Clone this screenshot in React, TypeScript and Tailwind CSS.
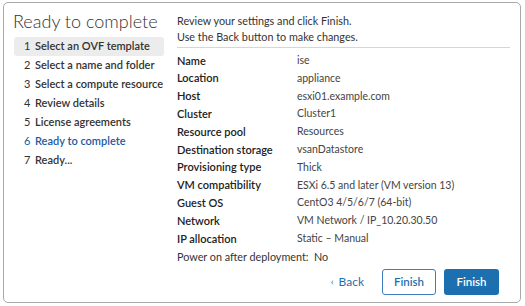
import React from "react";

const steps = [
  "Select an OVF template",
  "Select a name and folder",
  "Select a compute resource",
  "Review details",
  "License agreements",
  "Ready to complete",
  "Ready...",
];

const rows: [string, string][] = [
  ["Name", "ise"],
  ["Location", "appliance"],
  ["Host", "esxi01.example.com"],
  ["Cluster", "Cluster1"],
  ["Resource pool", "Resources"],
  ["Destination storage", "vsanDatastore"],
  ["Provisioning type", "Thick"],
  ["VM compatibility", "ESXi 6.5 and later (VM version 13)"],
  ["Guest OS", "CentO3 4/5/6/7 (64-bit)"],
  ["Network", "VM Network / IP_10.20.30.50"],
  ["IP allocation", "Static – Manual"],
];

export default function App() {
  return (
    <div className="w-[525px] h-[306px] bg-white pt-[2px] pl-[3px] pr-[4px] pb-[2px]" style={{ fontFamily: "Lato, 'Noto Sans', sans-serif" }}>
      <div className="h-[301px] border border-[#a8a8a8] rounded-[5px] flex text-[#222]">
        <div className="w-[163px] shrink-0 pl-[10px] pt-[6px] whitespace-nowrap">
          <div className="text-[18px] font-light leading-[24px] text-[#333] -ml-[1px]">Ready to complete</div>
          <div className="mt-[4px] flex flex-col">
            {steps.map((s, i) => (
              <div
                key={s}
                className={
                  "h-[19px] flex items-center rounded-[3px] pl-[10px] text-[11px] font-semibold w-[150px] " +
                  (i === 0 ? "bg-[#ececec] " : "") +
                  (i === 5 ? "text-[#1c5a9e]" : "text-[#333]")
                }
              >
                <span className="w-[11px] font-normal">{i + 1}</span>
                <span>{s}</span>
              </div>
            ))}
          </div>
        </div>
        <div className="flex-1 pl-[10px] pr-[10px] pt-[10px] flex flex-col whitespace-nowrap">
          <div className="text-[10.8px] leading-[16px] text-[#333]">
            <div>Review your settings and click Finish.</div>
            <div>Use the Back button to make changes.</div>
          </div>
          <div className="mt-[2px] border-t border-[#d6d6d6]" />
          <div className="mt-[4px] flex flex-col">
            {rows.map(([k, v]) => (
              <div key={k} className="h-[17.8px] flex items-center text-[11px]">
                <span className="w-[120px] font-semibold text-[#222]">{k}</span>
                <span className="text-[10.5px] text-[#444]">{v}</span>
              </div>
            ))}
            <div className="h-[17.8px] flex items-center text-[10.8px] text-[#333]">
              Power on after deployment:&nbsp; No
            </div>
          </div>
          <div className="mt-[3px] flex items-center justify-end gap-[8px] pr-[11px]">
            <button className="h-[26px] px-0 mr-[10px] text-[12px] text-[#1f6fb0] flex items-center gap-[5px]">
              <span className="text-[10px]">‹</span>Back
            </button>
            <button className="h-[26px] w-[54px] border border-[#3e7cc0] rounded-[3px] text-[11.5px] font-semibold text-[#1f6fb0] bg-white">
              Finish
            </button>
            <button className="h-[26px] w-[55px] rounded-[3px] text-[11.5px] font-semibold text-white bg-[#1c70b0]">
              Finish
            </button>
          </div>
        </div>
      </div>
    </div>
  );
}
